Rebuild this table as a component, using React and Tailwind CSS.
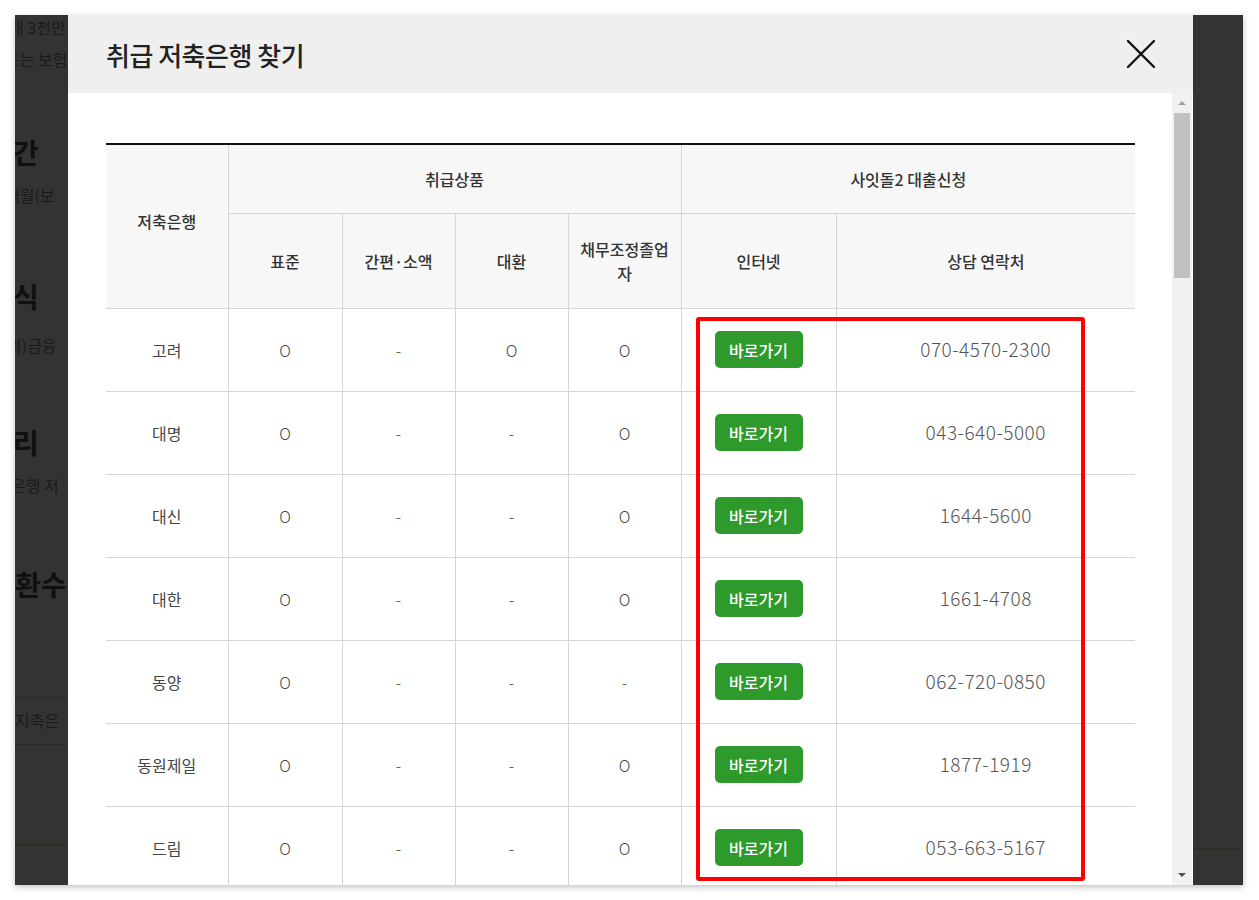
import React from 'react';

const rows = [
  ['고려', 'O', '-', 'O', 'O', '070-4570-2300'],
  ['대명', 'O', '-', '-', 'O', '043-640-5000'],
  ['대신', 'O', '-', '-', 'O', '1644-5600'],
  ['대한', 'O', '-', '-', 'O', '1661-4708'],
  ['동양', 'O', '-', '-', '-', '062-720-0850'],
  ['동원제일', 'O', '-', '-', 'O', '1877-1919'],
  ['드림', 'O', '-', '-', 'O', '053-663-5167'],
];

const font = { fontFamily: '"Noto Sans CJK KR", "Noto Sans", sans-serif' };

const BackdropLeft = () => (
  <div className="w-[53px] shrink-0 bg-[#333333] overflow-hidden flex flex-col text-[#1a1a1a] whitespace-nowrap">
    <div className="-ml-[6px] mt-[2px] text-[16px] leading-[20px]">대 3천만</div>
    <div className="-ml-[10px] mt-[12px] text-[16px] leading-[20px]">도는 보험</div>
    <div className="-ml-[2px] mt-[66px] text-[28px] font-bold leading-[34px] text-[#101010]">간</div>
    <div className="-ml-[10px] mt-[16px] text-[16px] leading-[20px]">개월(보</div>
    <div className="-ml-[2px] mt-[74px] text-[28px] font-bold leading-[34px] text-[#101010]">식</div>
    <div className="-ml-[8px] mt-[22px] text-[16px] leading-[20px]">의)금융</div>
    <div className="-ml-[2px] mt-[70px] text-[28px] font-bold leading-[34px] text-[#101010]">리</div>
    <div className="-ml-[4px] mt-[16px] text-[16px] leading-[20px]">은행 저</div>
    <div className="ml-0 mt-[72px] text-[28px] font-bold leading-[34px] text-[#101010]">환수</div>
    <div className="mt-[96px] border-t border-[#2a2a2a]" />
    <div className="ml-0 mt-[12px] text-[16px] leading-[20px]">지축은</div>
    <div className="mt-[14px] border-t border-[#2a2a2a]" />
    <div className="mt-[99px] h-[2px] bg-[#2e2e26]" />
  </div>
);

const BackdropRight = () => (
  <div className="w-[50px] shrink-0 bg-[#333333] flex flex-col">
    <div className="mt-[833px] h-[2px] bg-[#2e2e26]" />
  </div>
);

const Scrollbar = () => (
  <div className="w-[20px] shrink-0 bg-[#f1f1f1] flex flex-col items-center">
    <div className="h-[20px] flex items-center justify-center">
      <div className="w-0 h-0 border-l-[4px] border-r-[4px] border-b-[4px] border-l-transparent border-r-transparent border-b-[#a3a3a3]" />
    </div>
    <div className="w-[16px] h-[165px] bg-[#c1c1c1]" />
    <div className="flex-1" />
    <div className="h-[20px] flex items-center justify-center">
      <div className="w-0 h-0 border-l-[4px] border-r-[4px] border-t-[4px] border-l-transparent border-r-transparent border-t-[#505050]" />
    </div>
  </div>
);

const App = () => {
  return (
    <div className="w-[1259px] h-[900px] bg-white p-[15px]" style={font}>
      <div className="w-[1228px] h-[870px] flex shadow-[0_2px_6px_rgba(0,0,0,0.25)] overflow-hidden">
        <BackdropLeft />

        <div className="w-[1125px] shrink-0 flex flex-col bg-white">
          <div className="h-[78px] bg-[#efefef] flex items-center justify-between pl-[38px] pr-[36px]">
            <h1 className="text-[26px] font-medium text-[#222] tracking-[-0.5px]">취급 저축은행 찾기</h1>
            <svg width="32" height="32" viewBox="0 0 32 32" fill="none" stroke="#111" strokeWidth="2.4" strokeLinecap="round">
              <path d="M3 3 L29 29 M29 3 L3 29" />
            </svg>
          </div>

          <div className="flex flex-1 min-h-0">
            <div className="relative flex-1 overflow-hidden pt-[50px] pl-[38px] pr-[37px]">
              <table className="w-[1029px] border-collapse table-fixed border-t-2 border-t-[#111]">
                <colgroup>
                  <col className="w-[122px]" />
                  <col className="w-[114px]" />
                  <col className="w-[113px]" />
                  <col className="w-[113px]" />
                  <col className="w-[113px]" />
                  <col className="w-[155px]" />
                  <col className="w-[299px]" />
                </colgroup>
                <thead className="bg-[#f7f7f7] text-[#333] text-[16px]">
                  <tr className="h-[69px]">
                    <th rowSpan={2} className="font-medium border-r border-b border-[#d6d6d6] align-middle pb-[10px]">저축은행</th>
                    <th colSpan={4} className="font-medium border-r border-b border-[#d6d6d6]">취급상품</th>
                    <th colSpan={2} className="font-medium border-b border-[#d6d6d6]">사잇돌2 대출신청</th>
                  </tr>
                  <tr className="h-[95px]">
                    <th className="font-medium border-r border-b border-[#d6d6d6]">표준</th>
                    <th className="font-medium border-r border-b border-[#d6d6d6]">간편·소액</th>
                    <th className="font-medium border-r border-b border-[#d6d6d6]">대환</th>
                    <th className="font-medium border-r border-b border-[#d6d6d6] px-[8px] leading-[24px]">채무조정졸업자</th>
                    <th className="font-medium border-r border-b border-[#d6d6d6]">인터넷</th>
                    <th className="font-medium border-b border-[#d6d6d6]">상담 연락처</th>
                  </tr>
                </thead>
                <tbody className="text-[16px] text-[#444]">
                  {rows.map((r) => (
                    <tr key={r[0]} className="h-[83px]">
                      <td className="text-center border-r border-b border-[#d6d6d6]">{r[0]}</td>
                      <td className="text-center border-r border-b border-[#d6d6d6] font-light">{r[1]}</td>
                      <td className="text-center border-r border-b border-[#d6d6d6] font-light">{r[2]}</td>
                      <td className="text-center border-r border-b border-[#d6d6d6] font-light">{r[3]}</td>
                      <td className="text-center border-r border-b border-[#d6d6d6] font-light">{r[4]}</td>
                      <td className="text-center border-r border-b border-[#d6d6d6]">
                        <span className="inline-flex items-center justify-center w-[88px] h-[37px] rounded-[5px] bg-[#2e9a2c] text-white text-[16px] font-medium">바로가기</span>
                      </td>
                      <td className="text-center border-b border-[#d6d6d6] text-[19px] tracking-[0.5px] text-[#555] font-light">{r[5]}</td>
                    </tr>
                  ))}
                </tbody>
              </table>

              {/* highlight box */}
              <div className="absolute left-[628px] top-[224px] w-[389px] h-[564px] border-[4px] border-[#ff0000] rounded-[3px]" />
            </div>
            <Scrollbar />
            <div className="w-[1px] bg-white" />
          </div>
        </div>

        <BackdropRight />
      </div>
    </div>
  );
};

export default App;
